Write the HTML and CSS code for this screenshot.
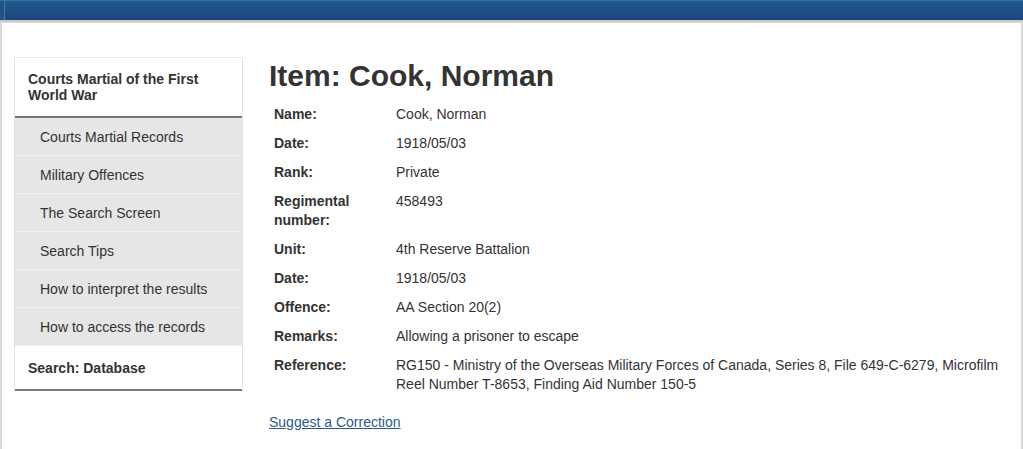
FILE: index.html
```html
<!DOCTYPE html>
<html lang="en">
<head>
<meta charset="utf-8">
<title>Item: Cook, Norman</title>
<link rel="stylesheet" href="styles.css">
</head>
<body>
<header class="topbar"></header>
<div class="strip"></div>
<div class="page">
  <nav class="sidebar">
    <div class="side-head">Courts Martial of the First World War</div>
    <ul class="side-list">
      <li>Courts Martial Records</li>
      <li>Military Offences</li>
      <li>The Search Screen</li>
      <li>Search Tips</li>
      <li>How to interpret the results</li>
      <li>How to access the records</li>
    </ul>
    <div class="side-foot">Search: Database</div>
  </nav>
  <main class="main">
    <h1 class="title">Item: Cook, Norman</h1>
    <dl class="record">
      <dt>Name:</dt><dd>Cook, Norman</dd>
      <dt>Date:</dt><dd>1918/05/03</dd>
      <dt>Rank:</dt><dd>Private</dd>
      <dt>Regimental number:</dt><dd>458493</dd>
      <dt>Unit:</dt><dd>4th Reserve Battalion</dd>
      <dt>Date:</dt><dd>1918/05/03</dd>
      <dt>Offence:</dt><dd>AA Section 20(2)</dd>
      <dt>Remarks:</dt><dd>Allowing a prisoner to escape</dd>
      <dt>Reference:</dt><dd>RG150 - Ministry of the Overseas Military Forces of Canada, Series 8, File 649-C-6279, Microfilm Reel Number T-8653, Finding Aid Number 150-5</dd>
    </dl>
    <a class="correction" href="#">Suggest a Correction</a>
  </main>
</div>
</body>
</html>
```

FILE: styles.css
```css
html, body {
  margin: 0;
  padding: 0;
  background: #ffffff;
}
body {
  font-family: "Liberation Sans", Arial, sans-serif;
  font-size: 14px;
  color: #333333;
  overflow: hidden;
}
.topbar {
  height: 19px;
  border-top: 1px solid #3a6f9e;
  background: linear-gradient(#1d5b91, #1f4479);
  box-shadow: inset 4px 0 0 #1f5285, inset 5px 0 0 #4a78a2;
}
.strip {
  height: 3px;
  background: linear-gradient(#bfc3c8, #d9d9d9);
}
.page {
  display: flex;
  align-items: flex-start;
  gap: 26px;
  border-left: 2px solid #d8d8d8;
  border-right: 2px solid #d8d8d8;
  padding: 34px 12px 20px 12px;
}
.sidebar {
  flex: none;
  width: 229px;
  box-sizing: border-box;
  border-left: 1px solid #e2e2e2;
  border-right: 1px solid #e2e2e2;
}
.side-head {
  border-top: 1px solid #e6e6e6;
  border-bottom: 2px solid #777777;
  padding: 13px 13px 13px 13px;
  font-weight: bold;
  line-height: 16px;
  background: #fff;
}
.side-list {
  list-style: none;
  margin: 0;
  padding: 0;
  background: #e6e6e6;
}
.side-list li {
  padding: 10px 25px 8px 25px;
  line-height: 19px;
  border-bottom: 1px solid #efefef;
}
.side-foot {
  padding: 13px 13px 11px 13px;
  line-height: 19px;
  font-weight: bold;
  background: #fff;
  border-bottom: 2px solid #777777;
}
.main {
  flex: 1;
  min-width: 0;
}
.title {
  margin: 2px 0 13px 0;
  font-size: 30px;
  line-height: 33px;
  font-weight: bold;
  color: #333333;
}
.record {
  display: grid;
  grid-template-columns: 122px 1fr;
  row-gap: 10px;
  margin: 0 0 19px 5px;
  line-height: 19px;
}
.record dt {
  font-weight: bold;
  padding-right: 30px;
}
.record dd {
  margin: 0;
}
.correction {
  color: #2a5b8b;
  text-decoration: underline;
  line-height: 19px;
}
```
